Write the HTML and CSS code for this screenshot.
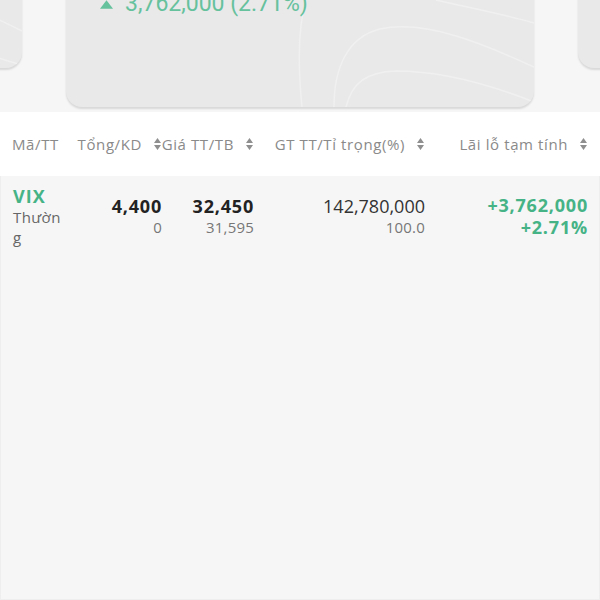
FILE: index.html
```html
<!DOCTYPE html>
<html lang="vi">
<head>
    <meta charset="UTF-8">
    <meta name="viewport" content="width=device-width, initial-scale=1.0">
    <title>Danh mục</title>
    <link rel="stylesheet" href="styles.css">
</head>
<body>
    <div class="top">
        <div class="strip">
            <div class="card side">
                <svg class="lines" viewBox="0 0 468 111" preserveAspectRatio="none">
                    <path d="M380 40 C420 50 440 60 468 74" />
                    <path d="M360 80 C410 90 440 100 468 108" />
                </svg>
            </div>
            <div class="card main">
                <svg class="lines" viewBox="0 0 468 150">
                    <path d="M236 150 C232 110 232 70 240 43" />
                    <path d="M268 150 C268 110 282 80 314 72 C360 62 420 88 468 110" />
                    <path d="M280 150 C286 126 300 115 330 114 C380 114 430 130 468 145" />
                    <path d="M370 43 C400 50 440 58 468 66" />
                </svg>
                <div class="total">
                    <svg class="up" viewBox="0 0 12 8"><path d="M6 0 L12 8 L0 8 Z" /></svg>
                    <span>3,762,000 (2.71%)</span>
                </div>
            </div>
            <div class="card side">
                <svg class="lines" viewBox="0 0 468 111" preserveAspectRatio="none">
                    <path d="M0 30 C10 34 20 38 30 42" />
                </svg>
            </div>
        </div>
    </div>

    <div class="head row">
        <div class="cell left">Mã/TT</div>
        <div class="cell">Tổng/KD <svg class="sort" viewBox="0 0 7 12"><path d="M3.5 0 L7 5 L0 5 Z M0 7 L7 7 L3.5 12 Z" /></svg></div>
        <div class="cell">Giá TT/TB <svg class="sort" viewBox="0 0 7 12"><path d="M3.5 0 L7 5 L0 5 Z M0 7 L7 7 L3.5 12 Z" /></svg></div>
        <div class="cell">GT TT/Tỉ trọng(%) <svg class="sort" viewBox="0 0 7 12"><path d="M3.5 0 L7 5 L0 5 Z M0 7 L7 7 L3.5 12 Z" /></svg></div>
        <div class="cell">Lãi lỗ tạm tính <svg class="sort" viewBox="0 0 7 12"><path d="M3.5 0 L7 5 L0 5 Z M0 7 L7 7 L3.5 12 Z" /></svg></div>
    </div>

    <div class="list">
        <div class="item row">
            <div class="cell left">
                <div class="code">VIX</div>
                <div class="type">Thường</div>
            </div>
            <div class="cell num">
                <div class="big bold">4,400</div>
                <div class="small">0</div>
            </div>
            <div class="cell num">
                <div class="big bold">32,450</div>
                <div class="small">31,595</div>
            </div>
            <div class="cell num">
                <div class="big">142,780,000</div>
                <div class="small">100.0</div>
            </div>
            <div class="cell num green">
                <div class="big bold">+3,762,000</div>
                <div class="big bold">+2.71%</div>
            </div>
        </div>
    </div>
</body>
</html>
```

FILE: styles.css
```css
* {
    margin: 0;
    padding: 0;
    box-sizing: border-box;
}
body {
    background-color: #f6f6f6;
    font-family: "Open Sans", "Noto Sans", sans-serif;
    color: #222;
}
.top {
    height: 112px;
    overflow: hidden;
    background-color: #f6f6f6;
}
.strip {
    margin-top: -43px;
    display: flex;
    justify-content: center;
    align-items: flex-start;
    gap: 44px;
}
.card {
    position: relative;
    flex-shrink: 0;
    width: 468px;
    background-color: #e9e9e9;
    border-radius: 16px;
    box-shadow: 0 2px 2px rgba(0, 0, 0, 0.12);
    overflow: hidden;
}
.card.main {
    height: 150px;
}
.card.side {
    height: 111px;
}
.lines {
    position: absolute;
    left: 0;
    top: 0;
    width: 100%;
    height: 100%;
}
.lines path {
    fill: none;
    stroke: #f0f0f0;
    stroke-width: 1.5;
}
.total {
    position: relative;
    display: flex;
    align-items: center;
    gap: 12px;
    padding: 34px 0 0 34px;
    font-family: Roboto, sans-serif;
    font-size: 23px;
    line-height: 26px;
    color: #66c19d;
}
.up {
    width: 13px;
    height: 9px;
    fill: #66c19d;
}
.row {
    display: grid;
    grid-template-columns: 58px 91px 92px 171px 163px;
    padding: 0 13px 0 12px;
}
.head {
    height: 64px;
    align-items: center;
    background-color: #fff;
    font-size: 15px;
    letter-spacing: 0.6px;
    color: #8a8a8a;
}
.cell {
    display: flex;
    align-items: center;
    justify-content: flex-end;
    white-space: nowrap;
}
.cell.left {
    justify-content: flex-start;
}
.sort {
    margin-left: 12px;
    width: 7px;
    height: 12px;
    fill: #8f8f8f;
}
.list {
    height: 424px;
    border-left: 1px solid #eeeeee;
    border-right: 1px solid #eeeeee;
    border-bottom: 1px solid #eeeeee;
}
.item {
    align-items: center;
    padding-top: 9px;
    padding-bottom: 8px;
}
.item .cell {
    flex-direction: column;
    align-items: flex-end;
}
.item .cell.left {
    align-items: flex-start;
    white-space: normal;
}
.code {
    font-size: 18px;
    font-weight: 700;
    line-height: 22px;
    letter-spacing: 1px;
    color: #45b386;
}
.type {
    width: 52px;
    font-size: 15px;
    line-height: 20px;
    letter-spacing: 0.4px;
    color: #666;
    word-break: break-all;
}
.big {
    font-size: 18px;
    line-height: 21px;
    color: #333;
}
.bold {
    font-weight: 700;
    letter-spacing: 0.8px;
    color: #222;
}
.small {
    font-size: 15px;
    line-height: 20px;
    letter-spacing: 0.2px;
    color: #777;
}
.green .big {
    line-height: 22px;
    color: #45b386;
}
```
